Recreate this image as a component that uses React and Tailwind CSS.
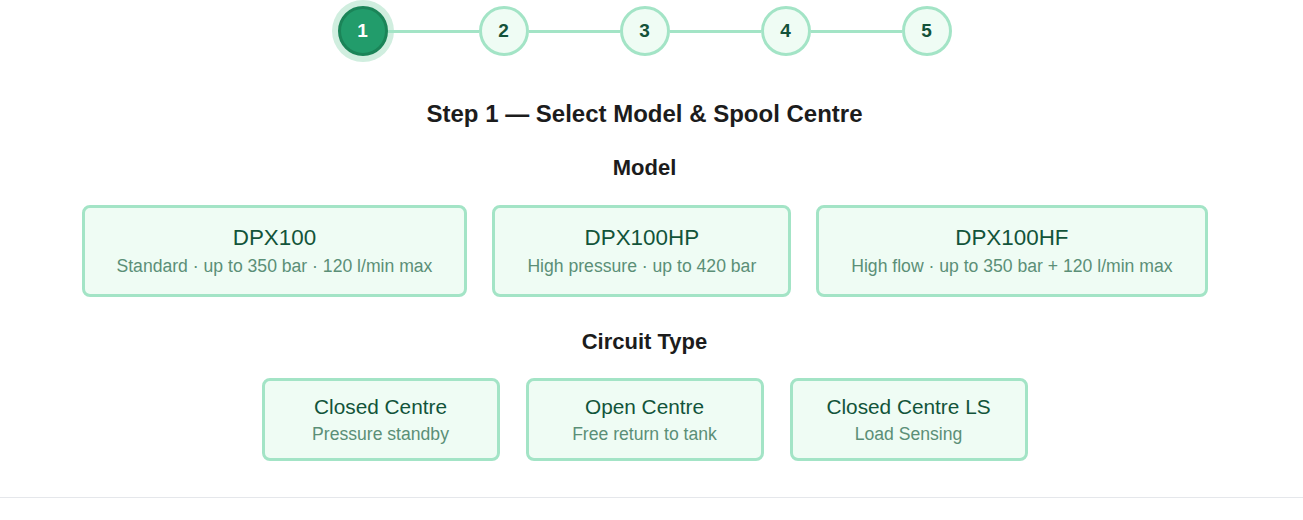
import React, { useState } from 'react';

const models = [
  { name: 'DPX100', desc: 'Standard · up to 350 bar · 120 l/min max' },
  { name: 'DPX100HP', desc: 'High pressure · up to 420 bar' },
  { name: 'DPX100HF', desc: 'High flow · up to 350 bar + 120 l/min max' },
];

const circuits = [
  { name: 'Closed Centre', desc: 'Pressure standby' },
  { name: 'Open Centre', desc: 'Free return to tank' },
  { name: 'Closed Centre LS', desc: 'Load Sensing' },
];

const Stepper = ({ current }) => (
  <div className="flex items-center justify-center pt-[6px]">
    {[1, 2, 3, 4, 5].map((n, i) => (
      <React.Fragment key={n}>
        {i > 0 && <div className="h-[3px] w-[91px] bg-[#a3e4c6]" />}
        {n === current ? (
          <div className="flex h-[50px] w-[50px] items-center justify-center rounded-full border-[3px] border-[#1b8458] bg-[#229c6b] text-[19px] font-bold text-white shadow-[0_0_0_6px_#d0eedf]">
            {n}
          </div>
        ) : (
          <div className="flex h-[50px] w-[50px] items-center justify-center rounded-full border-[3px] border-[#a3e4c6] bg-[#effcf4] text-[19px] font-bold text-[#14523a]">
            {n}
          </div>
        )}
      </React.Fragment>
    ))}
  </div>
);

export default function App() {
  const [model, setModel] = useState(null);
  const [circuit, setCircuit] = useState(null);

  return (
    <div className="min-h-[520px] bg-white font-['Liberation_Sans',Arial,sans-serif]">
      <div className="pr-[14px]">
        <Stepper current={1} />

        <h2 className="mt-[42px] text-center text-[24px] font-bold leading-[32px] text-[#1c1c1c]">
          Step 1 — Select Model &amp; Spool Centre
        </h2>

        {/* Model */}
        <h3 className="mt-[23px] text-center text-[22px] font-bold leading-[30px] text-[#1c1c1c]">
          Model
        </h3>
        <div className="mt-[22px] flex justify-center gap-[25px]">
          {models.map((m) => (
            <button
              key={m.name}
              onClick={() => setModel(m.name)}
              className="rounded-[8px] border-[3px] border-[#a3e4c6] bg-[#effcf4] px-8 pt-[15px] pb-[15px] text-center"
            >
              <div className="text-[22.4px] leading-[30px] text-[#12543a]">{m.name}</div>
              <div className="text-[17.6px] leading-[26px] text-[#5b8f77]">{m.desc}</div>
            </button>
          ))}
        </div>

        {/* Circuit Type */}
        <h3 className="mt-[30px] text-center text-[22px] font-bold leading-[30px] text-[#1c1c1c]">
          Circuit Type
        </h3>
        <div className="mt-[21px] flex justify-center gap-[26px]">
          {circuits.map((c) => (
            <button
              key={c.name}
              onClick={() => setCircuit(c.name)}
              className="w-[238px] rounded-[8px] border-[3px] border-[#a3e4c6] bg-[#effcf4] py-[12px] text-center"
            >
              <div className="text-[20.8px] leading-[28px] text-[#12543a]">{c.name}</div>
              <div className="mt-[2px] text-[17.6px] leading-[23px] text-[#5b8f77]">{c.desc}</div>
            </button>
          ))}
        </div>
      </div>

      <div className="mt-[36px] border-t border-[#e5e7eb]" />
    </div>
  );
}
